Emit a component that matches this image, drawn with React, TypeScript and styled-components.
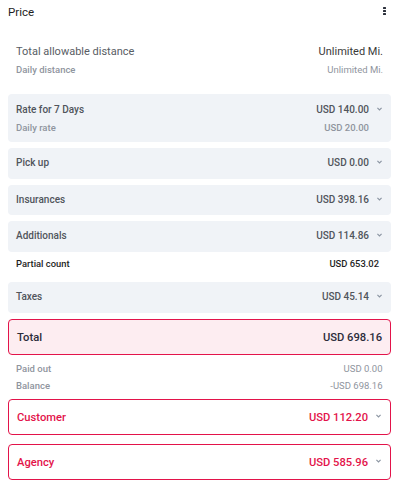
import React from "react";
import styled, { createGlobalStyle } from "styled-components";

const Global = createGlobalStyle`
  html, body { margin: 0; padding: 0; background: #fff; }
  body { font-family: Roboto, "Liberation Sans", Arial, sans-serif; }
`;

const Panel = styled.div`
  width: 382.5px;
  padding: 0 14.5px 8px 8px;
  display: flex;
  flex-direction: column;
`;

const Header = styled.div`
  height: 24px;
  display: flex;
  align-items: center;
  justify-content: space-between;
`;

const Title = styled.div`
  font-size: 11.5px;
  line-height: 14px;
  color: #1e1e1e;
  font-weight: 400;
`;

const Kebab = styled.div`
  display: flex;
  flex-direction: column;
  gap: 1.2px;
  margin-right: 5px;
  margin-top: -2px;
  span {
    width: 2.2px;
    height: 2.2px;
    background: #2a2f3a;
    border-radius: 0.5px;
  }
`;

const Distance = styled.div`
  padding: 20px 7.5px 18px 8px;
  display: flex;
  flex-direction: column;
  gap: 6px;
`;

const Line = styled.div<{ $h?: number }>`
  display: flex;
  justify-content: space-between;
  align-items: center;
  height: ${(p) => p.$h ?? 12}px;
`;

const Label = styled.span<{ $size: number; $color: string; $weight?: number }>`
  font-size: ${(p) => p.$size}px;
  line-height: 1;
  color: ${(p) => p.$color};
  font-weight: ${(p) => p.$weight ?? 400};
  white-space: nowrap;
`;

const Stack = styled.div<{ $gap: number }>`
  display: flex;
  flex-direction: column;
  gap: ${(p) => p.$gap}px;
`;

const Box = styled.div<{ $tall?: boolean }>`
  background: #f0f3f7;
  border-radius: 4px;
  padding: ${(p) => (p.$tall ? "10px 8.5px 8px 8px" : "0 8.5px 0 8px")};
  height: ${(p) => (p.$tall ? "48px" : "30.5px")};
  box-sizing: border-box;
  display: flex;
  flex-direction: column;
  justify-content: center;
  gap: 6px;
`;

const Right = styled.div`
  display: flex;
  align-items: center;
  gap: 8px;
`;

const ChevronSpace = styled.span`
  width: 5px;
  display: inline-block;
`;

const Partial = styled.div`
  height: 30.5px;
  box-sizing: border-box;
  padding: 7px 11.5px 0 8px;
  display: flex;
  align-items: flex-start;
  justify-content: space-between;
`;

const Highlight = styled.div<{ $filled?: boolean }>`
  border: 1px solid #e3134a;
  border-radius: 4px;
  background: ${(p) => (p.$filled ? "#fdedf1" : "#fff")};
  height: 36.3px;
  box-sizing: border-box;
  padding: 0 ${(p) => (p.$filled ? "7.5px" : "8.5px")} 0 8px;
  display: flex;
  align-items: center;
  justify-content: space-between;
`;

const Payments = styled.div`
  padding: 7px 8px 7.5px 8px;
  display: flex;
  flex-direction: column;
  gap: 5.4px;
`;

const Chevron = () => (
  <svg width="5" height="4" viewBox="0 0 5 4" style={{ marginTop: -2 }}>
    <polyline points="0.4,0.8 2.5,2.9 4.6,0.8" fill="none" stroke="#8d96a3" strokeWidth="1.2" />
  </svg>
);

const gray = "#50555c";
const light = "#8f959e";
const crimson = "#e3134a";

const Row = ({ label, amount }: { label: string; amount: string }) => (
  <Box>
    <Line>
      <Label $size={10} $color={gray} $weight={500}>{label}</Label>
      <Right>
        <Label $size={10} $color={gray} $weight={500}>{amount}</Label>
        <Chevron />
      </Right>
    </Line>
  </Box>
);

const Payer = ({ label, amount }: { label: string; amount: string }) => (
  <Highlight>
    <Label $size={11.2} $color={crimson} $weight={500}>{label}</Label>
    <Right>
      <Label $size={11.2} $color={crimson} $weight={500}>{amount}</Label>
      <Chevron />
    </Right>
  </Highlight>
);

export default function App() {
  return (
    <>
      <Global />
      <Panel>
        <Header>
          <Title>Price</Title>
          <Kebab>
            <span />
            <span />
            <span />
          </Kebab>
        </Header>
        <Distance>
          <Line $h={14}>
            <Label $size={11} $color="#585d64">Total allowable distance</Label>
            <Label $size={11} $color="#3a3a3a">Unlimited Mi.</Label>
          </Line>
          <Line>
            <Label $size={9.5} $color={light} $weight={500}>Daily distance</Label>
            <Label $size={9.5} $color={light}>Unlimited Mi.</Label>
          </Line>
        </Distance>
        <Stack $gap={6}>
          <Box $tall>
            <Line>
              <Label $size={10} $color={gray} $weight={500}>Rate for 7 Days</Label>
              <Right>
                <Label $size={10} $color={gray} $weight={500}>USD 140.00</Label>
                <Chevron />
              </Right>
            </Line>
            <Line>
              <Label $size={9.5} $color={light} $weight={500}>Daily rate</Label>
              <Right>
                <Label $size={9.5} $color={light} $weight={500}>USD 20.00</Label>
                <ChevronSpace />
              </Right>
            </Line>
          </Box>
          <Row label="Pick up" amount="USD 0.00" />
          <Row label="Insurances" amount="USD 398.16" />
          <Row label="Additionals" amount="USD 114.86" />
        </Stack>
        <Partial>
          <Label $size={9.4} $color="#1e1e1e" $weight={500}>Partial count</Label>
          <Label $size={9.4} $color="#1e1e1e" $weight={500}>USD 653.02</Label>
        </Partial>
        <Stack $gap={6.5}>
          <Row label="Taxes" amount="USD 45.14" />
          <Highlight $filled>
            <Label $size={11.2} $color="#2b2b3a" $weight={500}>Total</Label>
            <Label $size={11.2} $color="#2b2b3a" $weight={500}>USD 698.16</Label>
          </Highlight>
        </Stack>
        <Payments>
          <Line>
            <Label $size={9.5} $color={light} $weight={500}>Paid out</Label>
            <Label $size={9.5} $color={light}>USD 0.00</Label>
          </Line>
          <Line>
            <Label $size={9.5} $color={light} $weight={500}>Balance</Label>
            <Label $size={9.5} $color={light}>-USD 698.16</Label>
          </Line>
        </Payments>
        <Stack $gap={8.7}>
          <Payer label="Customer" amount="USD 112.20" />
          <Payer label="Agency" amount="USD 585.96" />
        </Stack>
      </Panel>
    </>
  );
}
